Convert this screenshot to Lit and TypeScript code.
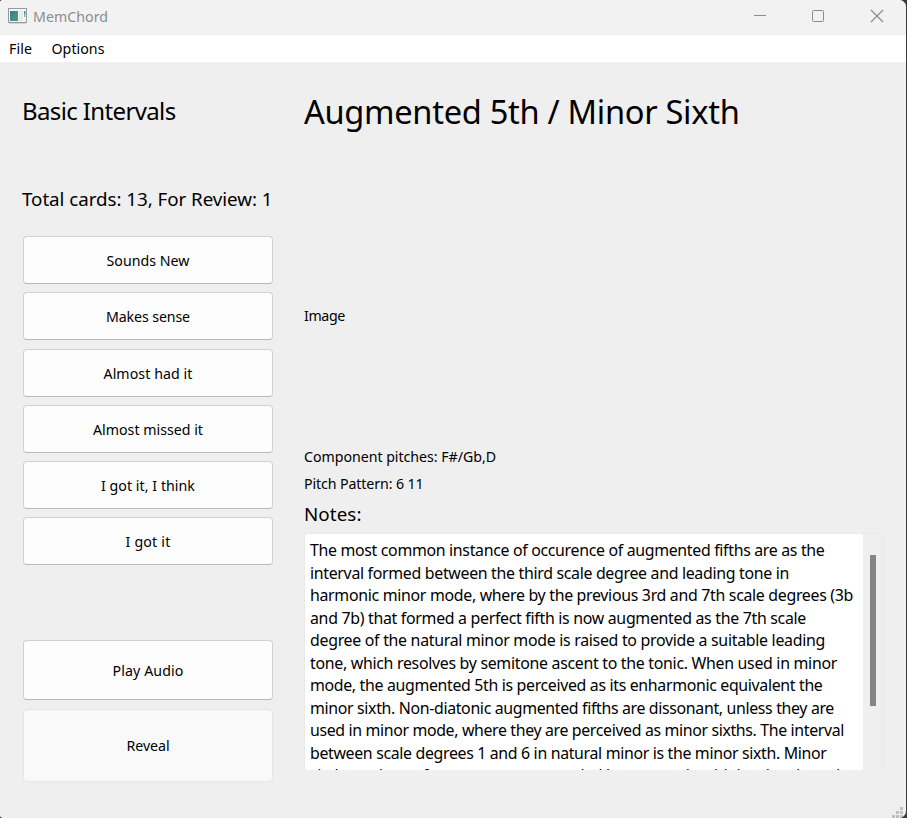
import { LitElement, html, css } from "lit";
import { customElement, property } from "lit/decorators.js";

/** A single line of text whose tracking is adjusted to reach a given width. */
@customElement("fit-text")
class FitText extends LitElement {
  @property({ type: Number }) width = 0;
  @property() text = "";

  static styles = css`
    :host { display: block; white-space: pre; }
    .run { display: inline-block; }
  `;

  firstUpdated() {
    const run = this.renderRoot.querySelector(".run") as HTMLElement;
    const natural = run.getBoundingClientRect().width;
    if (this.width && natural) {
      run.style.letterSpacing = `${(this.width - natural) / this.text.length}px`;
    }
  }

  render() {
    return html`<span class="run">${this.text}</span>`;
  }
}

const ANSWERS: [string, number][] = [
  ["Sounds New", 83],
  ["Makes sense", 84],
  ["Almost had it", 89],
  ["Almost missed it", 110],
  ["I got it, I think", 94],
  ["I got it", 45],
];

const NOTES: [string, number][] = [
  ["The most common instance of occurence of augmented fifths are as the", 514.5],
  ["interval formed between the third scale degree and leading tone in", 479],
  ["harmonic minor mode, where by the previous 3rd and 7th scale degrees (3b", 543],
  ["and 7b) that formed a perfect fifth is now augmented as the 7th scale", 496],
  ["degree of the natural minor mode is raised to provide a suitable leading", 515],
  ["tone, which resolves by semitone ascent to the tonic. When used in minor", 527],
  ["mode, the augmented 5th is perceived as its enharmonic equivalent the", 512.5],
  ["minor sixth. Non-diatonic augmented fifths are dissonant, unless they are", 524],
  ["used in minor mode, where they are perceived as minor sixths. The interval", 534],
  ["between scale degrees 1 and 6 in natural minor is the minor sixth. Minor", 516.5],
  ["sixths and are often seen as an extended harmony, should the chord need", 530],
];

@customElement("app-root")
class AppRoot extends LitElement {
  static styles = css`
    :host {
      display: block;
      height: 818px;
      background: #3a3a3a;
      font-family: "Noto Sans", "Open Sans", sans-serif;
      font-size: 14.2px;
      color: #000;
    }
    * { box-sizing: border-box; }
    .window {
      width: 906px;
      height: 818px;
      display: flex;
      flex-direction: column;
      background: #efefef;
      border-radius: 3px 7px 7px 3px;
      overflow: hidden;
      position: relative;
    }
    .titlebar {
      height: 35px;
      flex: none;
      display: flex;
      align-items: flex-start;
      background: #f2f2f2;
      color: #8d8d8d;
    }
    .app-icon { margin: 8px 0 0 8px; flex: none; }
    .title { margin: 7px 0 0 6px; line-height: 20px; flex: 1; }
    .controls { flex: none; }
    .menubar {
      height: 27px;
      flex: none;
      display: flex;
      gap: 19.5px;
      padding: 4px 9px 3px;
      line-height: 20px;
      background: #fff;
    }
    .body { display: flex; flex: 1; min-height: 0; }
    .side { width: 273px; padding-left: 23px; display: flex; flex-direction: column; }
    .deck { font-size: 24px; line-height: 34px; margin: 32px 0 0 -1px; }
    .counts { font-size: 18.8px; line-height: 28px; margin: 57px 0 23px -1px; }
    .answers { height: 329px; display: flex; flex-direction: column; gap: 8px; }
    .answers .btn:nth-child(3) { margin-top: 1px; }
    .btn {
      font: inherit;
      color: inherit;
      width: 250px;
      height: 48px;
      flex: none;
      padding: 0;
      display: flex;
      align-items: center;
      justify-content: center;
      background: #fdfdfd;
      border: 1px solid #d0d0d0;
      border-bottom-color: #b9b9b9;
      border-radius: 4px;
    }
    .play { height: 60px; margin-top: 75px; }
    .reveal {
      height: 73px;
      margin-top: 9px;
      padding-bottom: 1px;
      background: #f9f9f9;
      border-color: #e6e6e6;
    }
    .main { margin-left: 31px; width: 580px; }
    .name { font-size: 32.6px; line-height: 44px; margin-top: 28px; }
    .image {
      height: 253px;
      margin-top: 54px;
      padding-top: 2px;
      display: flex;
      align-items: center;
      line-height: 20px;
    }
    .pitches { line-height: 27px; margin-top: 2px; }
    .notes-label { font-size: 18.8px; line-height: 28px; margin: 3px 0 5px; }
    .notes {
      height: 237px;
      display: flex;
      border: 1px solid #e8e8e8;
      border-bottom: 0;
    }
    .page {
      width: 558px;
      overflow: hidden;
      background: #fff;
      padding: 5.4px 0 0 5px;
      font-size: 15.9px;
      line-height: 22.5px;
    }
    .track { width: 20px; padding: 21px 0 0 7px; }
    .thumb { width: 6px; height: 151px; background: #858585; }
    .grip { position: absolute; right: 3px; bottom: 0; }
  `;

  render() {
    return html`
      <div class="window">
        <div class="titlebar">
          <svg class="app-icon" width="19" height="16" viewBox="0 0 19 16">
            <defs>
              <linearGradient id="tile" x1="0" y1="0" x2="1" y2="1">
                <stop offset="0" stop-color="#3f7898" />
                <stop offset="1" stop-color="#4f9c74" />
              </linearGradient>
            </defs>
            <rect x=".5" y=".5" width="18" height="14" fill="#f4f5f7" stroke="#929aa3" />
            <path d="M1 15.5h17" stroke="#d2d4d6" />
            <rect x="2" y="3" width="8" height="10" fill="url(#tile)" />
            <rect x="11" y="3" width="4" height="10" fill="#e7e9ec" />
            <rect x="16" y="3" width="1.5" height="3" fill="#4a8fa0" />
            <rect x="16" y="6" width="1.5" height="3" fill="#7cc28c" />
          </svg>
          <fit-text class="title" text="MemChord" .width=${75}></fit-text>
          <svg class="controls" width="153" height="35" fill="none" stroke="#8b8b8b">
            <path d="M1 15.5h12" />
            <rect x="59.5" y="10.5" width="11" height="11" rx="1" />
            <path d="M118 10l12 12M130 10l-12 12" stroke-width="1.2" />
          </svg>
        </div>
        <div class="menubar">
          <fit-text text="File" .width=${23}></fit-text>
          <fit-text text="Options" .width=${53}></fit-text>
        </div>
        <div class="body">
          <div class="side">
            <fit-text class="deck" text="Basic Intervals" .width=${153.5}></fit-text>
            <fit-text class="counts" text="Total cards: 13, For Review: 1" .width=${250.5}></fit-text>
            <div class="answers">
              ${ANSWERS.map(
                ([label, width]) => html`
                  <button class="btn"><fit-text .text=${label} .width=${width}></fit-text></button>
                `
              )}
            </div>
            <button class="btn play"><fit-text text="Play Audio" .width=${71}></fit-text></button>
            <button class="btn reveal"><fit-text text="Reveal" .width=${43}></fit-text></button>
          </div>
          <div class="main">
            <fit-text class="name" text="Augmented 5th / Minor Sixth" .width=${435.5}></fit-text>
            <div class="image"><fit-text text="Image" .width=${41}></fit-text></div>
            <div class="pitches">
              <fit-text text="Component pitches: F#/Gb,D" .width=${192}></fit-text>
              <fit-text text="Pitch Pattern: 6 11" .width=${119.5}></fit-text>
            </div>
            <fit-text class="notes-label" text="Notes:" .width=${57.5}></fit-text>
            <div class="notes">
              <div class="page">
                ${NOTES.map(
                  ([line, width]) => html`<fit-text .text=${line} .width=${width}></fit-text>`
                )}
              </div>
              <div class="track"><div class="thumb"></div></div>
            </div>
          </div>
        </div>
        <svg class="grip" width="11" height="11" fill="#bfbfbf">
          <path d="M8 0h3v3h-3zM4 4h3v3h-3zM8 4h3v3h-3zM0 8h3v3h-3zM4 8h3v3h-3zM8 8h3v3h-3z" />
        </svg>
      </div>
    `;
  }
}
